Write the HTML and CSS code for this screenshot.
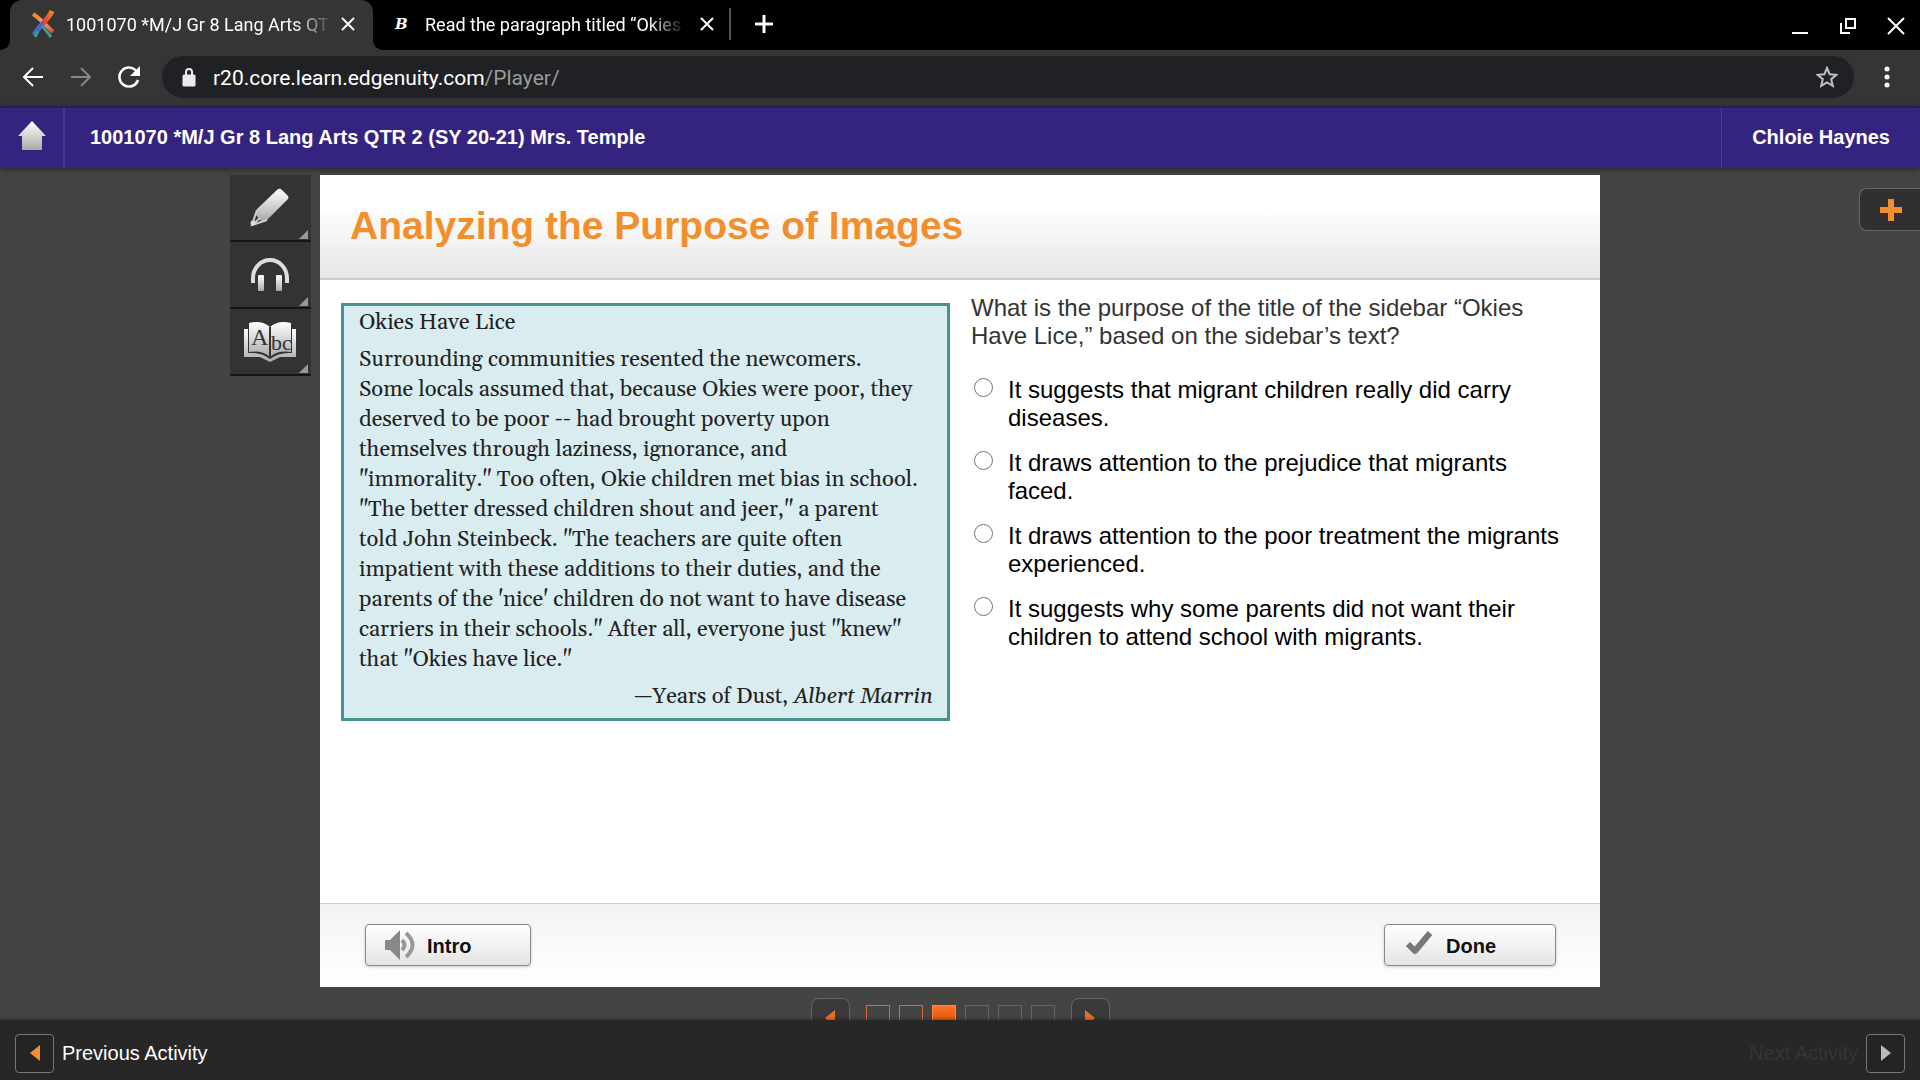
FILE: index.html
```html
<!DOCTYPE html>
<html lang="en">
<head>
    <meta charset="UTF-8">
    <meta name="viewport" content="width=device-width, initial-scale=1.0">
    <title>1001070 *M/J Gr 8 Lang Arts QTR 2</title>
    <link rel="stylesheet" href="styles.css">
</head>
<body>
    <!-- Browser window -->
    <div class="tab-strip">
        <div class="tab active">
            <svg class="favicon" viewBox="0 0 26 28">
                <defs>
                    <linearGradient id="arm1" x1="0" y1="0" x2="1" y2="1"><stop offset="0" stop-color="#f58220"/><stop offset="0.5" stop-color="#f0a070"/><stop offset="1" stop-color="#e2492f"/></linearGradient>
                    <linearGradient id="arm2" x1="1" y1="0" x2="0" y2="1"><stop offset="0" stop-color="#f58220"/><stop offset="0.4" stop-color="#e2492f"/><stop offset="0.6" stop-color="#5a5fc8"/><stop offset="1" stop-color="#2f6fc0"/></linearGradient>
                </defs>
                <path d="M3 4C8 7 16 15 23 22" fill="none" stroke="url(#arm1)" stroke-width="4"/>
                <path d="M22 1C19 9 8 17 4 25" fill="none" stroke="url(#arm2)" stroke-width="5"/>
                <path d="M12 16C15 19 18 23 21 27M8 21L5 27" fill="none" stroke="#3f9a94" stroke-width="3"/>
            </svg>
            <span class="tab-title">1001070 *M/J Gr 8 Lang Arts QT</span>
            <button class="icon-btn" aria-label="Close tab"><svg width="14" height="14" viewBox="0 0 14 14"><path d="M1 1l12 12M13 1L1 13" stroke="#fff" stroke-width="2"/></svg></button>
        </div>
        <div class="tab">
            <span class="favicon-b">B</span>
            <span class="tab-title">Read the paragraph titled “Okies</span>
            <button class="icon-btn" aria-label="Close tab"><svg width="14" height="14" viewBox="0 0 14 14"><path d="M1 1l12 12M13 1L1 13" stroke="#fff" stroke-width="2"/></svg></button>
        </div>
        <button class="icon-btn new-tab" aria-label="New tab"><svg width="18" height="18" viewBox="0 0 18 18"><path d="M9 0v18M0 9h18" stroke="#fff" stroke-width="3"/></svg></button>
        <div class="window-controls">
            <button class="icon-btn" aria-label="Minimize"><svg width="18" height="18" viewBox="0 0 18 18"><path d="M1 16h16" stroke="#fff" stroke-width="2"/></svg></button>
            <button class="icon-btn" aria-label="Restore"><svg width="18" height="18" viewBox="0 0 18 18"><path d="M7 2h9v9H7zM2 6v10h9" fill="none" stroke="#fff" stroke-width="2"/></svg></button>
            <button class="icon-btn" aria-label="Close"><svg width="18" height="18" viewBox="0 0 18 18"><path d="M1 1l16 16M17 1L1 17" stroke="#fff" stroke-width="2"/></svg></button>
        </div>
    </div>
    <div class="toolbar">
        <button class="icon-btn" aria-label="Back"><svg width="24" height="24" viewBox="0 0 24 24"><path d="M22 12H4M12 3l-9 9 9 9" fill="none" stroke="#fff" stroke-width="2"/></svg></button>
        <button class="icon-btn" aria-label="Forward"><svg width="24" height="24" viewBox="0 0 24 24"><path d="M2 12h18M12 3l9 9-9 9" fill="none" stroke="#888" stroke-width="2"/></svg></button>
        <button class="icon-btn" aria-label="Reload"><svg width="24" height="24" viewBox="0 0 24 24"><path d="M21 15a9.500 9.500 0 1 1-1-8" fill="none" stroke="#fff" stroke-width="2.500"/><path d="M23 1v10h-10z" fill="#fff"/></svg></button>
        <div class="omnibox">
            <svg width="14" height="20" viewBox="0 0 14 20"><path d="M2 9h10v9H2z" fill="#e8eaed" stroke="#e8eaed" stroke-width="3" stroke-linejoin="round"/><path d="M4 8V5a3 3 0 0 1 6 0v3" fill="none" stroke="#e8eaed" stroke-width="2"/></svg>
            <a class="url" href="#">r20.core.learn.edgenuity.com<span>/Player/</span></a>
            <button class="icon-btn" aria-label="Bookmark"><svg width="22" height="22" viewBox="0 0 22 22"><path d="M11 2l2.600 6.200 6.800.6-5.200 4.400 1.600 6.600-5.800-3.500-5.800 3.500 1.600-6.600-5.200-4.400 6.800-.6z" fill="none" stroke="#bdc1c6" stroke-width="2"/></svg></button>
        </div>
        <button class="icon-btn" aria-label="Menu"><svg width="6" height="22" viewBox="0 0 6 22"><circle cx="3" cy="3" r="2.500" fill="#fff"/><circle cx="3" cy="11" r="2.500" fill="#fff"/><circle cx="3" cy="19" r="2.500" fill="#fff"/></svg></button>
    </div>

    <!-- Course header -->
    <header class="course-bar">
        <a class="home" href="#" aria-label="Home">
            <svg width="28" height="30" viewBox="0 0 28 30">
                <defs><linearGradient id="silver" x1="0" y1="0" x2="0" y2="1"><stop offset="0" stop-color="#fff"/><stop offset="1" stop-color="#aaa"/></linearGradient></defs>
                <path d="M14 0L28 15H24V29H4V15H0z" fill="url(#silver)"/>
            </svg>
        </a>
        <h1 class="course-name">1001070 *M/J Gr 8 Lang Arts QTR 2 (SY 20-21) Mrs. Temple</h1>
        <a class="student" href="#">Chloie Haynes</a>
    </header>

    <main class="stage">
        <nav class="tools">
            <button class="tool" aria-label="Highlighter">
                <svg width="54" height="44" viewBox="0 0 54 44">
                    <path d="M35 3Q37 2 39 4L45 10Q46 12 45 13L24 34 18 35 13 29 14 23z" fill="url(#silver)"/>
                    <path d="M14 24L9 39 24 34M9 39l8-7" fill="none" stroke="#ccc" stroke-width="2"/>
                    <circle cx="10" cy="37" r="2.500" fill="#ddd"/>
                </svg>
            </button>
            <button class="tool" aria-label="Read aloud">
                <svg width="54" height="44" viewBox="0 0 54 44">
                    <path d="M10 30V25A17 18 0 0 1 44 25V30" fill="none" stroke="#ddd" stroke-width="4"/>
                    <rect x="15" y="22" width="6" height="16" rx="1" fill="url(#silver)"/>
                    <rect x="33" y="22" width="6" height="16" rx="1" fill="url(#silver)"/>
                </svg>
            </button>
            <button class="tool" aria-label="Glossary">
                <svg width="54" height="44" viewBox="0 0 54 44">
                    <path d="M1 9H5V33Q18 32 27 39Q36 32 49 33V9H53V37H37L27 42 17 37H1z" fill="url(#silver)"/>
                    <path d="M6 3Q19 0 27 7Q35 0 48 3V32Q35 30 27 37Q19 30 6 32z" fill="url(#silver)"/>
                    <path d="M27 7V38" stroke="#333" stroke-width="2"/>
                    <text x="8" y="25" class="glyph glyph-a">A</text>
                    <text x="28" y="30" class="glyph">bc</text>
                </svg>
            </button>
        </nav>

        <section class="lesson">
            <div class="panel">
                <h2 class="panel-title">Analyzing the Purpose of Images</h2>
                <div class="panel-body">
                    <article class="passage">
                        <p>Okies Have Lice</p>
                        <p>Surrounding communities resented the newcomers.<br>
                        Some locals assumed that, because Okies were poor, they<br>
                        deserved to be poor -- had brought poverty upon<br>
                        themselves through laziness, ignorance, and<br>
                        "immorality." Too often, Okie children met bias in school.<br>
                        "The better dressed children shout and jeer," a parent<br>
                        told John Steinbeck. "The teachers are quite often<br>
                        impatient with these additions to their duties, and the<br>
                        parents of the 'nice' children do not want to have disease<br>
                        carriers in their schools." After all, everyone just "knew"<br>
                        that "Okies have lice."</p>
                        <p class="source">—Years of Dust, <em>Albert Marrin</em></p>
                    </article>
                    <form class="question">
                        <p class="prompt">What is the purpose of the title of the sidebar “Okies Have Lice,” based on the sidebar’s text?</p>
                        <label class="option"><input type="radio" name="answer"><span>It suggests that migrant children really did carry diseases.</span></label>
                        <label class="option"><input type="radio" name="answer"><span>It draws attention to the prejudice that migrants faced.</span></label>
                        <label class="option"><input type="radio" name="answer"><span>It draws attention to the poor treatment the migrants experienced.</span></label>
                        <label class="option"><input type="radio" name="answer"><span>It suggests why some parents did not want their children to attend school with migrants.</span></label>
                    </form>
                </div>
                <div class="panel-footer">
                    <button class="action">
                        <svg width="32" height="32" viewBox="0 0 32 32">
                            <path d="M1 11H6L16 1V31L6 21H1z" fill="#888"/>
                            <path d="M18 11Q23 16 18 21M22 4Q35 16 22 28" fill="none" stroke="#999" stroke-width="4"/>
                        </svg>
                        <span>Intro</span>
                    </button>
                    <button class="action done">
                        <svg width="32" height="32" viewBox="0 0 32 32"><path d="M5 15l7 7L27 4" fill="none" stroke="#777" stroke-width="6" stroke-linejoin="round"/></svg>
                        <span>Done</span>
                    </button>
                </div>
            </div>
            <nav class="pager">
                <button class="square-btn" aria-label="Previous frame"><svg width="10" height="16" viewBox="0 0 10 16"><path d="M10 0v16L0 8z" fill="#e8702a"/></svg></button>
                <div class="frames">
                    <a class="frame seen" href="#" aria-label="Frame 1"></a>
                    <a class="frame seen" href="#" aria-label="Frame 2"></a>
                    <a class="frame current" href="#" aria-label="Frame 3"></a>
                    <a class="frame" href="#" aria-label="Frame 4"></a>
                    <a class="frame" href="#" aria-label="Frame 5"></a>
                    <a class="frame" href="#" aria-label="Frame 6"></a>
                </div>
                <button class="square-btn" aria-label="Next frame"><svg width="10" height="16" viewBox="0 0 10 16"><path d="M0 0v16L10 8z" fill="#e8702a"/></svg></button>
            </nav>
        </section>

        <button class="expand" aria-label="Expand"><svg width="22" height="22" viewBox="0 0 22 22"><path d="M11 0v22M0 11h22" stroke="#f58e2c" stroke-width="6"/></svg></button>
    </main>

    <footer class="activity-bar">
        <button class="square-btn" id="prev"><svg width="10" height="16" viewBox="0 0 10 16"><path d="M10 0v16L0 8z" fill="#f58e2c"/></svg></button>
        <label for="prev">Previous Activity</label>
        <label class="disabled" for="next">Next Activity</label>
        <button class="square-btn" id="next"><svg width="10" height="16" viewBox="0 0 10 16"><path d="M0 0v16L10 8z" fill="#bbb"/></svg></button>
    </footer>
</body>
</html>
```
FILE: styles.css
```css
* {
    box-sizing: border-box;
}
body {
    margin: 0;
    height: 100vh;
    display: flex;
    flex-direction: column;
    overflow: hidden;
    background: #444;
    font-family: "Liberation Sans", Arial, sans-serif;
    font-size: 20px;
}
h1, h2, p {
    margin: 0;
}
a {
    color: inherit;
    text-decoration: none;
}
button {
    font: inherit;
    cursor: pointer;
}
svg {
    display: block;
    flex-shrink: 0;
}
.icon-btn {
    display: flex;
    padding: 0;
    border: 0;
    background: none;
}

/* browser tabs */
.tab-strip {
    display: flex;
    align-items: center;
    height: 50px;
    padding: 0 0 2px 10px;
    background: #000;
    color: #fff;
    font-family: Roboto, sans-serif;
    font-size: 18px;
}
.tab {
    display: flex;
    align-items: center;
    width: 358px;
    height: 32px;
    padding: 0 15px 0 22px;
    border-right: 2px solid #555;
}
.tab.active {
    position: relative;
    align-self: flex-start;
    width: 363px;
    height: 50px;
    padding: 0 18px 2px 20px;
    border: 0;
    border-radius: 12px 12px 0 0;
    background: #353535;
}
.tab.active::before,
.tab.active::after {
    content: "";
    position: absolute;
    bottom: 0;
    width: 10px;
    height: 10px;
}
.tab.active::before {
    left: -10px;
    background: radial-gradient(circle at 0 0, #000 10px, #353535 10px);
}
.tab.active::after {
    right: -10px;
    background: radial-gradient(circle at 100% 0, #000 10px, #353535 10px);
}
.favicon {
    width: 26px;
    height: 28px;
}
.favicon-b {
    width: 14px;
    font-family: "DejaVu Serif", serif;
    font-weight: bold;
    font-style: italic;
    font-size: 15px;
}
.tab-title {
    flex: 1;
    margin: 0 8px 0 10px;
    white-space: nowrap;
    -webkit-mask-image: linear-gradient(90deg, #000 85%, transparent);
    mask-image: linear-gradient(90deg, #000 85%, transparent);
}
.favicon-b + .tab-title {
    margin: 0 14px 0 16px;
}
.new-tab {
    margin-left: 24px;
}
.window-controls {
    display: flex;
    gap: 30px;
    margin: 4px 15px 0 auto;
}

/* address bar */
.toolbar {
    display: flex;
    align-items: center;
    gap: 24px;
    height: 56px;
    padding: 0 30px 2px 21px;
    background: #353535;
    font-family: Roboto, sans-serif;
}
.omnibox {
    flex: 1;
    display: flex;
    align-items: center;
    gap: 17px;
    height: 42px;
    margin: 0 6px 0 -3px;
    padding: 0 16px 0 20px;
    border-radius: 21px;
    background: #202124;
}
.url {
    flex: 1;
    padding-top: 2px;
    color: #fff;
    font-size: 21px;
}
.url span {
    color: #9a9a9a;
}

/* course header */
.course-bar {
    position: relative;
    display: flex;
    align-items: stretch;
    height: 62px;
    border-top: 2px solid #282050;
    background: #35247f;
    color: #fff;
    font-weight: bold;
    line-height: 58px;
    box-shadow: 0 2px 5px rgba(0, 0, 0, 0.4);
}
.home {
    display: flex;
    align-items: center;
    width: 65px;
    padding: 0 0 4px 18px;
    border-right: 2px solid #43348c;
}
.course-name {
    flex: 1;
    padding-left: 25px;
    font-size: 20px;
}
.student {
    padding: 0 30px;
    border-left: 1px solid #4a3c8e;
}

/* stage */
.stage {
    flex: 1;
    display: grid;
    grid-template-columns: 1fr 4fr 1fr;
    min-height: 0;
    overflow: hidden;
}
.tools {
    justify-self: end;
    padding: 7px 9px 0 0;
}
.tool {
    position: relative;
    display: flex;
    align-items: center;
    justify-content: center;
    width: 81px;
    height: 67px;
    padding: 0 2px 0 0;
    border: 0;
    border-bottom: 2px solid #151515;
    background: #333;
}
.tool::after {
    content: "";
    position: absolute;
    right: 3px;
    bottom: 1px;
    border-left: 9px solid transparent;
    border-bottom: 9px solid #999;
}
.glyph {
    font-family: "Liberation Serif", serif;
    font-size: 22px;
    fill: #333;
}
.glyph-a {
    font-size: 24px;
}
.lesson {
    display: flex;
    flex-direction: column;
    min-height: 0;
    padding-top: 7px;
}
.panel {
    flex: 1;
    display: flex;
    flex-direction: column;
    background: #fff;
}
.panel-title {
    height: 105px;
    padding-left: 30px;
    border-bottom: 2px solid #ccc;
    background: linear-gradient(#fff 30%, #e6e6e6);
    color: #f28f2c;
    font-size: 39px;
    line-height: 102px;
}
.panel-body {
    flex: 1;
    display: grid;
    grid-template-columns: 609px 1fr;
    align-items: start;
    gap: 21px;
    padding: 14px 30px 0 21px;
}
.passage {
    margin-top: 9px;
    padding: 2px 14px 6px 15px;
    border: 3px solid #48918e;
    background: #d9ecf0;
    color: #222;
    font-family: Georgia, Gelasio, "Liberation Serif", serif;
    font-size: 22px;
    line-height: 30px;
}
.passage p {
    margin-bottom: 7px;
    white-space: nowrap;
}
.passage .source {
    margin: 0;
    text-align: right;
}
.question {
    color: #000;
    font-size: 24px;
    line-height: 28px;
}
.prompt {
    margin-bottom: 26px;
    color: #333;
}
.option {
    display: flex;
    gap: 15px;
    margin-bottom: 17px;
}
.option input {
    flex-shrink: 0;
    width: 19px;
    height: 19px;
    margin: 2px 0 0 3px;
}
.panel-footer {
    display: flex;
    justify-content: space-between;
    align-items: flex-start;
    height: 84px;
    padding: 20px 44px 0 45px;
    border-top: 1px solid #ccc;
    background: linear-gradient(#f3f3f3, #fff);
}
.action {
    display: flex;
    align-items: center;
    gap: 11px;
    width: 166px;
    height: 42px;
    padding: 0 0 0 18px;
    border: 1px solid #888;
    border-radius: 4px;
    background: linear-gradient(#fff, #e4e4e4);
    box-shadow: 0 1px 3px rgba(0, 0, 0, 0.2);
    color: #111;
    font-weight: bold;
}
.action span {
    padding-top: 2px;
}
.action.done {
    width: 172px;
}

/* frame pager, runs under the activity bar */
.pager {
    display: flex;
    justify-content: center;
    align-items: flex-start;
    gap: 16px;
    height: 33px;
    padding-top: 11px;
}
.frames {
    display: flex;
    gap: 9px;
    padding-top: 7px;
}
.frame {
    width: 24px;
    height: 24px;
    border: 1px solid #666;
}
.frame.seen {
    border-color: #e0692c;
}
.frame.current {
    border-color: #ff8a3c;
    background: linear-gradient(#ff7320, #d04a00);
}
.square-btn {
    display: flex;
    align-items: center;
    justify-content: center;
    flex-shrink: 0;
    width: 39px;
    height: 39px;
    padding: 0;
    border: 1px solid #777;
    border-radius: 4px;
    background: #242424;
}
.pager .square-btn {
    border-color: #666;
    border-radius: 8px;
    background: #3a3a3a;
}
.expand {
    display: flex;
    align-items: center;
    justify-self: end;
    width: 61px;
    height: 43px;
    margin-top: 20px;
    padding: 0 0 0 20px;
    border: 1px solid #666;
    border-right: 0;
    border-radius: 8px 0 0 8px;
    background: #303030;
}

/* bottom bar */
.activity-bar {
    position: relative;
    display: flex;
    align-items: center;
    gap: 8px;
    height: 60px;
    padding: 6px 15px 0;
    background: #272727;
    color: #fff;
    box-shadow: 0 0 4px rgba(0, 0, 0, 0.5);
}
.disabled {
    margin-left: auto;
    color: #353535;
}
```
